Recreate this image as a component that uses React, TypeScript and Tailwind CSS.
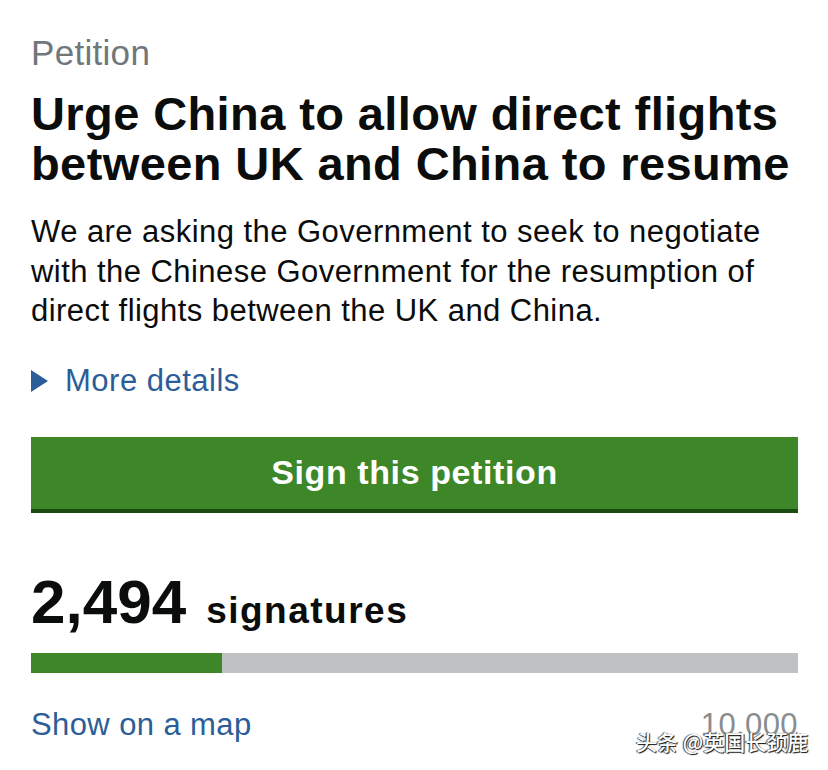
export default function App() {
	const signed = 2494
	const target = 10000
	const pct = (signed / target) * 100

	return (
		<div className="relative w-[828px] h-[770px] overflow-hidden bg-white font-['Liberation_Sans',Arial,sans-serif] text-[#0b0c0c]">
			<div className="flex flex-col pt-[33px] pl-[31px] pr-[30px]">
				{/* HEADING */}
				<span className="text-[35px] leading-[40px] tracking-[0.3px] text-[#6f777b]">Petition</span>
				<h1 className="mt-[16px] text-[47px] leading-[50px] font-bold tracking-[0.4px]">
					Urge China to allow direct flights between UK and China to resume
				</h1>

				{/* SUMMARY */}
				<p className="mt-[23px] text-[31px] leading-[39.5px] tracking-[0.45px]">
					We are asking the Government to seek to negotiate with the Chinese Government for the resumption of direct
					flights between the UK and China.
				</p>

				<div className="mt-[30px] flex items-center gap-[17px] text-[31px] leading-[40px] tracking-[0.5px] text-[#2b5e98]">
					<svg width="17" height="22" viewBox="0 0 17 22" className="shrink-0">
						<path d="M0 0 L17 11 L0 22 Z" fill="#2b5e98" />
					</svg>
					<span>More details</span>
				</div>

				{/* BUTTON */}
				<button className="mt-[36px] h-[76px] w-full bg-[#3d8728] border-b-4 border-[#1b4a11] text-white text-[34px] font-bold tracking-[0.6px]">
					Sign this petition
				</button>

				{/* COUNT */}
				<div className="mt-[54px] flex items-baseline gap-[20px] leading-[70px]">
					<span className="text-[62px] font-bold">2,494</span>
					<span className="text-[37px] font-bold tracking-[1.5px]">signatures</span>
				</div>

				<div className="mt-[7px] h-[20px] w-full bg-[#bfc1c3]">
					<div className="h-full bg-[#3d8728]" style={{ width: `${pct}%` }} />
				</div>

				<div className="mt-[32px] flex justify-between text-[31px] leading-[40px] tracking-[0.4px]">
					<span className="text-[#2b5e98]">Show on a map</span>
					<span className="text-[#8a8d8f]">10,000</span>
				</div>
			</div>

			{/* WATERMARK */}
			<span className="absolute left-[636px] top-[728px] text-[21px] leading-[26px] font-medium text-white font-['Noto_Sans_CJK_SC',sans-serif] [text-shadow:1px_1px_1px_#111,-1px_0_1px_#333]">
				头条 @英国长颈鹿
			</span>
		</div>
	)
}
